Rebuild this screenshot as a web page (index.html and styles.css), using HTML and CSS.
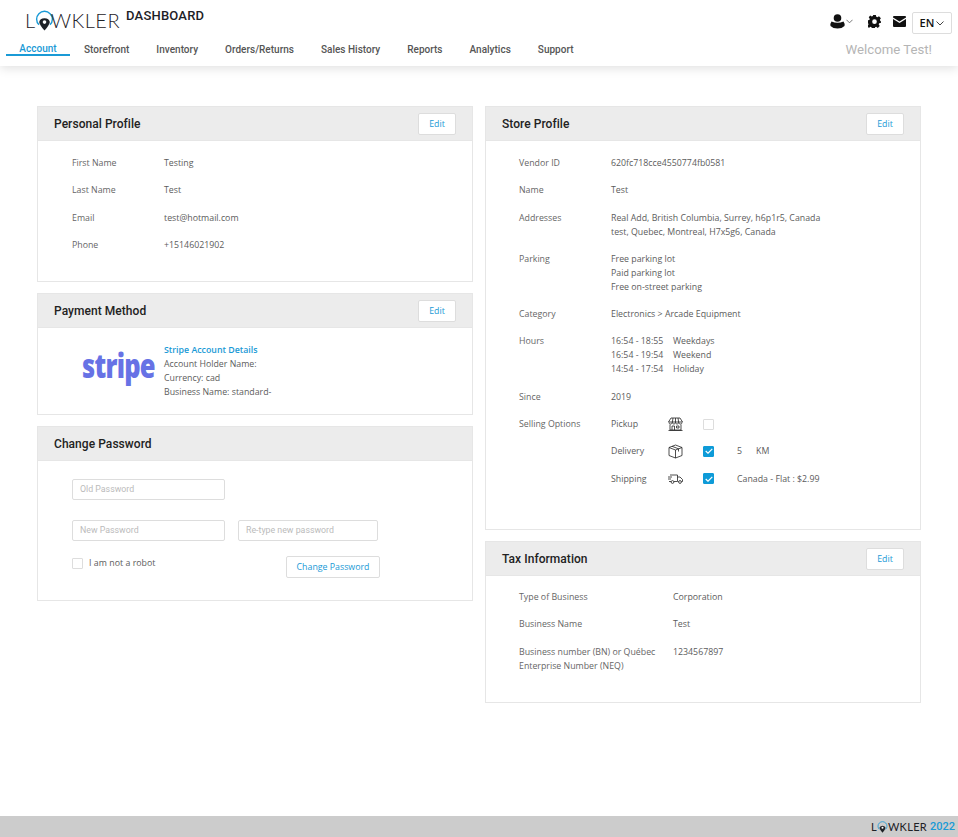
FILE: index.html
```html
<!DOCTYPE html>
<html>
<head>
    <title>Lowkler Dashboard</title>
    <link rel="stylesheet" href="styles.css">
</head>
<body>
    <header class="topbar">
        <div class="topbar-left">
            <div class="brand">
                <span class="logo">L<svg class="logo-pin" viewBox="0 0 20 24"><path d="M4.2 15.5A8.3 8.3 0 1 1 15.8 15.5" fill="none" stroke="#1a9ad6" stroke-width="1.5"/><path d="M4.4 12.5 Q5 9 10 8.6 Q15 9 15.6 12.5 Q15.4 15.5 10 21.5 Q4.6 15.5 4.4 12.5Z" fill="#1d2126"/><circle cx="10" cy="12.6" r="1.9" fill="#fff"/></svg>WKLER</span>
                <span class="brand-title">DASHBOARD</span>
            </div>
            <nav class="nav">
                <a class="nav-item active">Account</a>
                <a class="nav-item">Storefront</a>
                <a class="nav-item">Inventory</a>
                <a class="nav-item">Orders/Returns</a>
                <a class="nav-item">Sales History</a>
                <a class="nav-item">Reports</a>
                <a class="nav-item">Analytics</a>
                <a class="nav-item">Support</a>
            </nav>
        </div>
        <div class="topbar-right">
            <div class="tools">
                <span class="tool-user">
                    <svg width="15" height="15" viewBox="0 0 15 15"><circle cx="7.5" cy="4" r="3.8" fill="#111"/><path d="M1.5 7.5 Q7.5 10 13.5 7.5 Q15 9.5 14.5 12 Q12 14.5 7.5 14.5 Q3 14.5 .5 12 Q0 9.5 1.5 7.5Z" fill="#111"/></svg>
                    <svg class="chev" width="7" height="5" viewBox="0 0 8 5"><path d="M.5.5 4 4 7.5.5" fill="none" stroke="#666"/></svg>
                </span>
                <svg class="tool-gear" width="13" height="13" viewBox="0 0 24 24"><path fill="#111" fill-rule="evenodd" d="M9.500 0h5l.8 3.400 2 .9 3-1.900 3.500 3.500-1.900 3 .9 2L24 12v2.500l-3.400.8-.9 2 1.900 3-3.500 3.500-3-1.900-2 .9-.8 2.700h-5l-.8-2.700-2-.9-3 1.900L-.9 20.300l1.900-3-.9-2L-1 14.500V10l3.400-.8.9-2-1.900-3L4 .7l3 1.900 2-.9zM12 8a4.300 4.300 0 1 0 0 8.600A4.300 4.300 0 0 0 12 8z"/></svg>
                <svg class="tool-mail" width="13" height="11" viewBox="0 0 13 11"><path fill="#111" d="M1 0h11a1 1 0 0 1 1 1v.6L6.500 5.600 0 1.600V1a1 1 0 0 1 1-1zM0 3l6.500 4L13 3v7a1 1 0 0 1-1 1H1a1 1 0 0 1-1-1z"/></svg>
                <span class="lang">EN<svg width="8" height="5" viewBox="0 0 8 5"><path d="M.5.5 4 4 7.5.5" fill="none" stroke="#444"/></svg></span>
            </div>
            <div class="welcome">Welcome Test!</div>
        </div>
    </header>

    <main class="columns">
        <div class="column">
            <section class="card profile-card">
                <div class="card-head"><h3>Personal Profile</h3><button class="btn">Edit</button></div>
                <div class="card-body">
                    <div class="row"><span class="label">First Name</span><span>Testing</span></div>
                    <div class="row"><span class="label">Last Name</span><span>Test</span></div>
                    <div class="row"><span class="label">Email</span><span>test@hotmail.com</span></div>
                    <div class="row"><span class="label">Phone</span><span>+15146021902</span></div>
                </div>
            </section>

            <section class="card payment-card">
                <div class="card-head"><h3>Payment Method</h3><button class="btn">Edit</button></div>
                <div class="payment-body">
                    <div class="stripe-logo">stripe</div>
                    <div>
                        <div class="stripe-link">Stripe Account Details</div>
                        <div>Account Holder Name:</div>
                        <div>Currency: cad</div>
                        <div>Business Name: standard-</div>
                    </div>
                </div>
            </section>

            <section class="card password-card">
                <div class="card-head"><h3>Change Password</h3></div>
                <div class="password-body">
                    <div class="field-row"><div class="field">Old Password</div></div>
                    <div class="field-row"><div class="field">New Password</div><div class="field field-short">Re-type new password</div></div>
                    <div class="robot-row">
                        <label class="robot"><span class="check"></span>I am not a robot</label>
                        <button class="btn btn-wide">Change Password</button>
                    </div>
                </div>
            </section>
        </div>

        <div class="column">
            <section class="card store-card">
                <div class="card-head"><h3>Store Profile</h3><button class="btn">Edit</button></div>
                <div class="card-body">
                    <div class="row"><span class="label">Vendor ID</span><span>620fc718cce4550774fb0581</span></div>
                    <div class="row"><span class="label">Name</span><span>Test</span></div>
                    <div class="row"><span class="label">Addresses</span><span>Real Add, British Columbia, Surrey, h6p1r5, Canada<br>test, Quebec, Montreal, H7x5g6, Canada</span></div>
                    <div class="row"><span class="label">Parking</span><span>Free parking lot<br>Paid parking lot<br>Free on-street parking</span></div>
                    <div class="row"><span class="label">Category</span><span>Electronics &gt; Arcade Equipment</span></div>
                    <div class="row">
                        <span class="label">Hours</span>
                        <div class="hours">
                            <span>16:54 - 18:55</span><span>Weekdays</span>
                            <span>16:54 - 19:54</span><span>Weekend</span>
                            <span>14:54 - 17:54</span><span>Holiday</span>
                        </div>
                    </div>
                    <div class="row"><span class="label">Since</span><span>2019</span></div>
                    <div class="row selling">
                        <span class="label">Selling Options</span>
                        <div>
                            <div class="option">
                                <span class="option-name">Pickup</span>
                                <svg class="option-icon" width="15" height="14" viewBox="0 0 15 14" fill="none" stroke="#222" stroke-width=".8"><path d="M3 1h9l2.500 4H.5zM1 5.500c0 2 3 2 3.300 0 .3 2 3 2 3.200 0 .2 2 3 2 3.200 0 .3 2 3.300 2 3.300 0M5 1 4.300 5.500M10 1l.7 4.500M7.500 1v4.500M2 7.500v5.500h11V7.500M4 13V9h2.500v4M8.500 9H11v2H8.500zM.5 13.500h14"/></svg>
                                <span class="check"></span>
                            </div>
                            <div class="option">
                                <span class="option-name">Delivery</span>
                                <svg class="option-icon" width="15" height="15" viewBox="0 0 15 15" fill="none" stroke="#222" stroke-width=".8"><path d="M7.500 1 14 3.500v8L7.500 14 1 11.500v-8zM1 3.500 7.500 6 14 3.500M7.500 6v8M4 2.300 10.500 4.800V7.500"/></svg>
                                <span class="check checked"><svg width="8" height="6" viewBox="0 0 8 6"><path d="M.7 3 3 5.200 7.300.8" fill="none" stroke="#fff" stroke-width="1.200"/></svg></span>
                                <span class="option-extra">5</span><span class="option-unit">KM</span>
                            </div>
                            <div class="option">
                                <span class="option-name">Shipping</span>
                                <svg class="option-icon" width="15" height="10" viewBox="0 0 15 10" fill="none" stroke="#222" stroke-width=".8"><path d="M2 1h7.500v6.500H6M3 7.500H1M9.500 3H12l2.500 2.500v2h-1M10.500 7.500h.5M0 3h4M0 5h3"/><circle cx="4.500" cy="8" r="1.400"/><circle cx="12" cy="8" r="1.400"/></svg>
                                <span class="check checked"><svg width="8" height="6" viewBox="0 0 8 6"><path d="M.7 3 3 5.200 7.300.8" fill="none" stroke="#fff" stroke-width="1.200"/></svg></span>
                                <span class="option-extra">Canada - Flat : $2.99</span>
                            </div>
                        </div>
                    </div>
                </div>
            </section>

            <section class="card tax-card">
                <div class="card-head"><h3>Tax Information</h3><button class="btn">Edit</button></div>
                <div class="card-body tax-body">
                    <div class="row"><span class="label">Type of Business</span><span>Corporation</span></div>
                    <div class="row"><span class="label">Business Name</span><span>Test</span></div>
                    <div class="row"><span class="label">Business number (BN) or Québec Enterprise Number (NEQ)</span><span>1234567897</span></div>
                </div>
            </section>
        </div>
    </main>

    <footer class="footer">
        <span class="logo logo-small">L<svg class="logo-pin" viewBox="0 0 20 24"><path d="M4.2 15.5A8.3 8.3 0 1 1 15.8 15.5" fill="none" stroke="#1a9ad6" stroke-width="1.5"/><path d="M4.4 12.5 Q5 9 10 8.6 Q15 9 15.6 12.5 Q15.4 15.5 10 21.5 Q4.6 15.5 4.4 12.5Z" fill="#1d2126"/><circle cx="10" cy="12.6" r="1.9" fill="#fff"/></svg>WKLER</span>
        <span class="footer-year">2022</span>
    </footer>
</body>
</html>
```

FILE: styles.css
```css
html, body {
    margin: 0;
    height: 100%;
}

body {
    display: flex;
    flex-direction: column;
    min-height: 837px;
    font-family: "Open Sans", sans-serif;
    font-size: 8.800px;
    line-height: 14px;
    color: #5c5c5c;
    background-color: #fff;
}

.topbar {
    display: flex;
    justify-content: space-between;
    height: 66px;
    box-shadow: 0 2px 10px rgba(0,0,0,0.13);
    font-family: Roboto, sans-serif;
}

.topbar-left {
    padding-left: 6px;
}

.brand {
    display: flex;
    align-items: flex-start;
    height: 41px;
    padding: 8px 0 0 19px;
    box-sizing: border-box;
}

.logo {
    display: flex;
    align-items: center;
    height: 24px;
    font-family: Lato, sans-serif;
    font-weight: 300;
    font-size: 20px;
    letter-spacing: 0.5px;
    color: #1d2126;
}

.logo-pin {
    width: 19px;
    height: 23px;
    margin: 2px -3px 0 -1px;
}

.brand-title {
    margin-left: 6px;
    font-weight: 500;
    font-size: 13px;
    line-height: 16px;
    letter-spacing: 0.2px;
    color: #1d2126;
}

.nav {
    display: flex;
    gap: 27px;
}

.nav-item {
    font-weight: 500;
    font-size: 10px;
    line-height: 14px;
    letter-spacing: 0.01px;
    padding-top: 2px;
    color: #555;
}

.nav-item.active {
    width: 64px;
    height: 12px;
    padding-top: 1px;
    margin-right: -13px;
    text-align: center;
    color: #1a9ad6;
    border-bottom: 2px solid #1a9ad6;
}

.topbar-right {
    display: flex;
    flex-direction: column;
    align-items: flex-end;
    padding: 12px 6px 0 0;
}

.tools {
    display: flex;
    align-items: center;
    height: 22px;
}

.tool-user {
    display: flex;
    align-items: center;
    margin-top: -4px;
}

.chev {
    margin-left: 1px;
}

.tool-gear {
    margin: -4px 0 0 15px;
}

.tool-mail {
    margin: -4px 0 0 12px;
}

.lang {
    display: flex;
    align-items: center;
    justify-content: center;
    gap: 2px;
    width: 38px;
    height: 20px;
    margin-left: 6px;
    border: 1px solid #ddd;
    border-radius: 2px;
    font-family: "Open Sans", sans-serif;
    font-size: 11px;
    font-weight: 600;
    color: #111;
}

.welcome {
    margin: 8px 20px 0 0;
    font-size: 13.200px;
    line-height: 16px;
    font-weight: 400;
    color: #b5b5b5;
}

.columns {
    display: flex;
    flex: 1;
    gap: 12px;
    padding: 40px 37px 0;
}

.column {
    display: flex;
    flex-direction: column;
    gap: 11px;
    width: 436px;
}

.card {
    box-sizing: border-box;
    border: 1px solid #e6e6e6;
    background-color: #fff;
}

.profile-card { height: 176px; }
.payment-card { height: 122px; }
.password-card { height: 175px; }
.store-card { height: 424px; }
.tax-card { height: 162px; }

.card-head {
    display: flex;
    align-items: center;
    justify-content: space-between;
    height: 33px;
    padding: 0 16px;
    background-color: #ececec;
    border-bottom: 1px solid #e6e6e6;
}

.card-head h3 {
    margin: 0;
    font-family: Roboto, sans-serif;
    font-size: 12px;
    font-weight: 500;
    letter-spacing: 0.05px;
    color: #222;
}

.btn {
    width: 38px;
    height: 22px;
    padding: 0;
    border: 1px solid #ddd;
    border-radius: 2px;
    background-color: #fff;
    font-family: "Open Sans", sans-serif;
    font-size: 8.800px;
    color: #1a9ad6;
}

.card-body {
    padding: 15px 34px 0;
}

.store-card .card-body {
    padding-left: 33px;
}

.row {
    display: grid;
    grid-template-columns: 92px 1fr;
    margin-bottom: 13.300px;
}

.label {
    color: #666;
}

.card-body.tax-body {
    padding: 14px 33px 0;
}

.tax-body .row {
    grid-template-columns: 154px 1fr;
}

.hours {
    display: grid;
    grid-template-columns: 62px 1fr;
}

.selling {
    margin-bottom: 0;
}

.option {
    display: flex;
    align-items: center;
    height: 14px;
    margin-bottom: 13.300px;
}

.option-name {
    width: 57px;
}

.option-icon {
    width: 15px;
    margin-right: 20px;
}

.option-extra {
    margin-left: 23px;
}

.option-unit {
    margin-left: 14px;
}

.check {
    display: flex;
    align-items: center;
    justify-content: center;
    box-sizing: border-box;
    width: 11px;
    height: 11px;
    border: 1px solid #ddd;
    border-radius: 1px;
}

.check.checked {
    border-color: #0e9bd8;
    background-color: #0e9bd8;
}

.payment-body {
    display: flex;
    padding: 15px 0 0 44px;
}

.stripe-logo {
    width: 82px;
    margin-top: 1px;
    font-weight: 800;
    font-size: 34px;
    line-height: 42px;
    letter-spacing: -1px;
    transform: scaleX(0.75);
    transform-origin: left center;
    color: #6772e5;
}

.stripe-link {
    font-weight: 600;
    color: #1a9ad6;
}

.password-body {
    padding: 18px 34px 0;
}

.field-row {
    display: flex;
    gap: 13px;
    margin-bottom: 20px;
}

.field {
    box-sizing: border-box;
    width: 153px;
    height: 21px;
    padding-left: 7px;
    border: 1px solid #ddd;
    border-radius: 2px;
    font-family: Roboto, sans-serif;
    line-height: 19px;
    color: #bbb;
}

.field-short {
    width: 140px;
}

.robot-row {
    display: flex;
    justify-content: space-between;
    width: 308px;
    margin-top: -5px;
}

.robot {
    display: flex;
    align-items: center;
    gap: 6px;
    height: 14px;
    letter-spacing: 0.03px;
}

.btn-wide {
    width: 94px;
}

.footer {
    display: flex;
    align-items: center;
    justify-content: flex-end;
    gap: 3px;
    height: 21px;
    padding-right: 3px;
    background-color: #ccc;
    font-family: Roboto, sans-serif;
}

.logo-small {
    font-size: 11px;
    font-weight: 400;
    letter-spacing: 0.3px;
}

.logo-small .logo-pin {
    width: 11px;
    height: 13px;
    margin: 2px 0 0 0;
}

.footer-year {
    font-size: 11px;
    font-weight: 500;
    color: #1a9ad6;
}
```
